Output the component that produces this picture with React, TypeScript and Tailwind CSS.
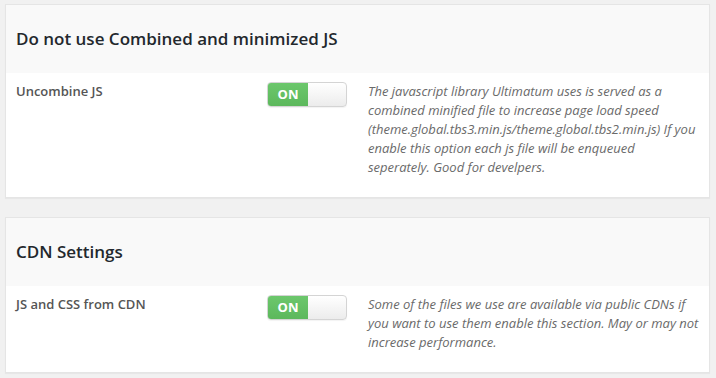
import React from "react";

function Toggle() {
  return (
    <div className="flex h-[25px] w-[80px] overflow-hidden rounded-[4px] border border-[#d4d4d4] bg-gradient-to-b from-[#ffffff] to-[#ececec] shadow-[0_1px_1px_rgba(0,0,0,0.05)]">
      <div className="flex h-full w-[40px] items-center justify-center bg-gradient-to-b from-[#6cc76c] to-[#5cb85c] text-[13px] font-bold text-white">
        ON
      </div>
    </div>
  );
}

function Panel({
  title,
  label,
  desc,
}: {
  title: string;
  label: string;
  desc: string;
}) {
  return (
    <div className="border border-[#e5e5e5] bg-white shadow-[0_1px_1px_rgba(0,0,0,0.04)]">
      <div className="flex h-[68px] items-center bg-[#f9f9f9] px-[10px]">
        <h2 className="text-[17px] font-semibold text-[#23282d]">{title}</h2>
      </div>
      <div className="flex px-[10px] pt-[9px] pb-[20px]">
        <div className="w-[251px] shrink-0 text-[13px] leading-[19px] font-semibold text-[#555]">
          {label}
        </div>
        <div className="w-[101px] shrink-0">
          <Toggle />
        </div>
        <p className="w-[336px] text-[13px] leading-[19px] italic text-[#6a6a6a]">{desc}</p>
      </div>
    </div>
  );
}

export default function App() {
  return (
    <div
      className="min-h-[378px] w-[716px] bg-[#f1f1f1] pt-[4px] pl-[5px] pr-[6px]"
      style={{ fontFamily: '"Open Sans", "Liberation Sans", sans-serif' }}
    >
      <div className="flex flex-col gap-[19px]">
        <Panel
          title="Do not use Combined and minimized JS"
          label="Uncombine JS"
          desc="The javascript library Ultimatum uses is served as a combined minified file to increase page load speed (theme.global.tbs3.min.js/theme.global.tbs2.min.js) If you enable this option each js file will be enqueued seperately. Good for develpers."
        />
        <Panel
          title="CDN Settings"
          label="JS and CSS from CDN"
          desc="Some of the files we use are available via public CDNs if you want to use them enable this section. May or may not increase performance."
        />
      </div>
    </div>
  );
}
